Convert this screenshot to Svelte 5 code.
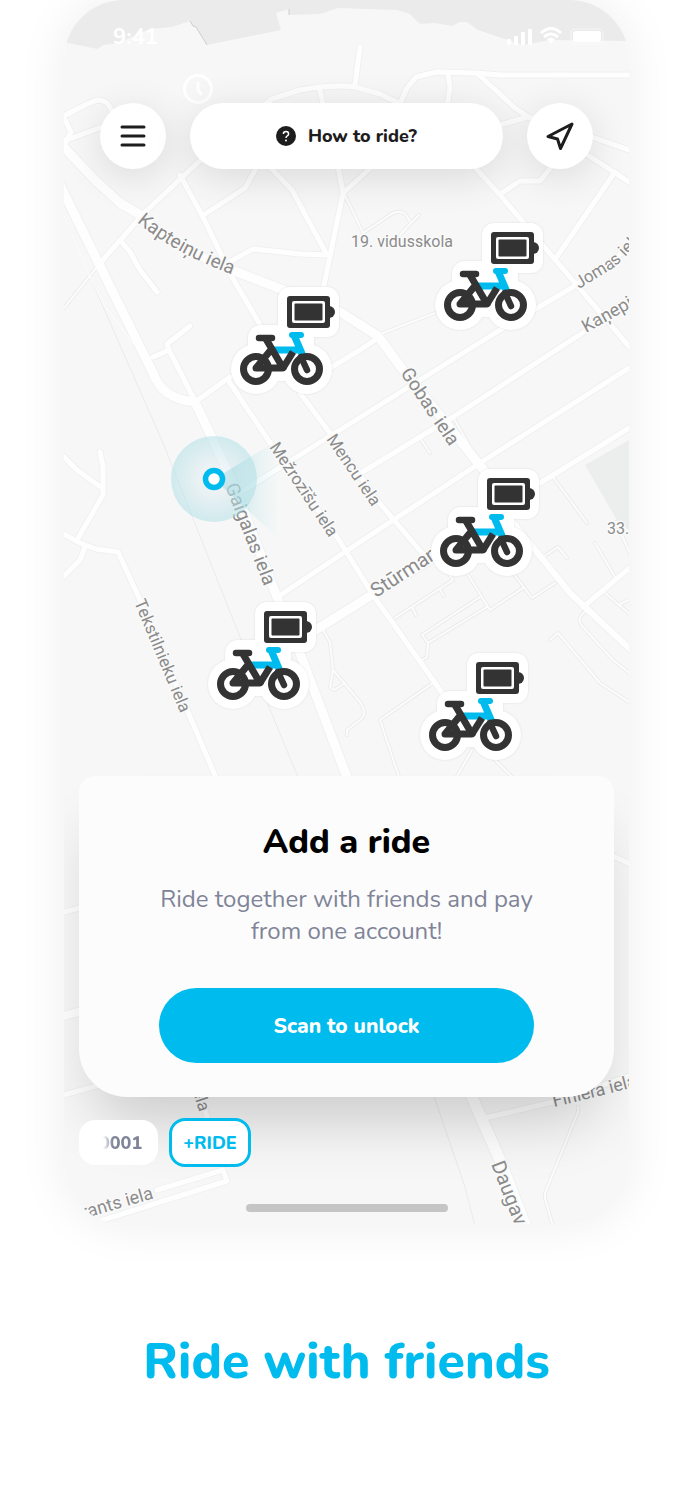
<script lang="ts">
  type Road = { d: string; w: number };
  type Label = { id: string; d: string; text: string; size: number };

  let selected = $state("+RIDE");

  const roads: Road[] = [
    { w: 5, d: "M60 118L85 105L97 100Q104 100 108 104L120 125" },
    { w: 5, d: "M60 142L75 137L110 124M60 110L71 132L66 142" },
    { w: 5, d: "M250 116L272 99L300 90Q335 84 355 87L380 94L405 106" },
    { w: 5, d: "M319 87L324 108M360 47L355 85" },
    { w: 5, d: "M399 106L407 88L416 77L437 72L475 73L500 75H632" },
    { w: 5, d: "M448 73L450 88L447 106M479 75L515 108L530 118" },
    { w: 5, d: "M496 126L528 117L560 126L632 151M580 150L632 184" },
    { w: 5, d: "M615 172L556 258M500 194L520 181H540L552 166" },
    { w: 5, d: "M472 164L500 195L575 283L632 350" },
    { w: 5, d: "M205 156L145 212L101 262" },
    { w: 5, d: "M180 175L203 217L232 277L262 328M202 216L245 188L258 165" },
    { w: 5, d: "M226 264L253 249L300 254L327 255M268 165L292 190L327 255" },
    { w: 5, d: "M338 166L343 193L323 290M343 193L374 165" },
    { w: 5, d: "M120 240L130 252L140 270L157 292" },
    { w: 5, d: "M153 357L169 350L167 344L190 326M169 350L195 401" },
    { w: 5, d: "M195 402L230 377M320 374L360 350L378 338" },
    { w: 5, d: "M228 380L273 447L337 537L373 595L445 697" },
    { w: 5, d: "M300 393L330 433L377 500L428 560" },
    { w: 5, d: "M233 497L303 453L500 330L573 287L632 246" },
    { w: 5, d: "M354 477L453 417L587 330L632 300" },
    { w: 5, d: "M279 596L360 542L480 463L632 366" },
    { w: 5, d: "M540 483L610 440L632 426" },
    { w: 5, d: "M583 607L632 566" },
    { w: 5, d: "M64 457L77 470L102 488M100 452L103 467V495L77 540" },
    { w: 5, d: "M60 532L80 543L96 549L118 552L140 600L188 712L217 780" },
    { w: 5, d: "M85 547L80 560L60 580" },
    { w: 5, d: "M60 913L100 903M60 1096L100 1085" },
    { w: 8, d: "M60 1017L100 1006" },
    { w: 5, d: "M157 1190L223 1170L227 1181L97 1222M190 1060L208 1120" },
    { w: 5, d: "M485 1118L553 1102L632 1075M600 850L632 865" },
    { w: 6, d: "M510 519L570 593L632 651" },
    { w: 9, d: "M314 631L375 593L450 548" },
    { w: 9, d: "M60 143L95 180L120 203L137 213Q175 248 232 270L340 312L378 336L400 366L430 403L490 478" },
    { w: 9, d: "M60 185L97 260L153 373Q162 399 195 402L213 440L233 483L277 597L300 653L348 780" },
    { w: 11, d: "M460 1070L500 1160L527 1230" },
  ];

  const lanes = [
    "M64 308L101 262",
    "M345 195L363 233L393 213Q402 210 406 215L411 223L400 235M411 223L419 215",
    "M383 333L435 313",
    "M453 417L470 447L481 462M420 438L430 453",
    "M553 477L587 523M595 543L615 577M605 593L632 616M620 604L629 600",
    "M543 557L558 547L567 558M513 573L532 598L555 583",
    "M467 573L490 610L523 588M395 618L453 580L440 560",
    "M428 643L422 635L480 597M428 643L487 607M428 643L427 657L422 660M412 607L416 615M440 590L444 596",
    "M585 612Q576 618 582 626L613 660L632 675",
    "M550 640L558 633L600 683L632 704",
    "M433 683L380 720L400 780M472 750L455 780M490 755L520 785",
    "M323 630L330 642L333 670L360 702Q368 714 360 720L347 730V735",
    "M333 670L330 687L334 690L345 683",
    "M616 522L632 558",
    "M578 1107V1112L545 1193V1198L554 1230",
  ];

  const labels: Label[] = [
    { id: "kapteinu", d: "M137 222Q177 256 245 279", text: "Kapteiņu iela", size: 19 },
    { id: "gobas", d: "M400 373L468 474", text: "Gobas iela", size: 19 },
    { id: "mencu", d: "M326 439L391 535", text: "Mencu iela", size: 17 },
    { id: "mezrozisu", d: "M269 447L350 569", text: "Mežrozīšu iela", size: 17 },
    { id: "gaigalas", d: "M225 486L275 614", text: "Gaigalas iela", size: 19 },
    { id: "tekstilnieku", d: "M134 602L199 758", text: "Tekstilnieku iela", size: 17 },
    { id: "sturmanu", d: "M376 598L501 517", text: "Stūrmaņu", size: 20 },
    { id: "jomas", d: "M579 289L615 267L650 232", text: "Jomas iela", size: 17 },
    { id: "kanepju", d: "M586 333L661 291", text: "Kaņepju iela", size: 18 },
    { id: "vidusskola", d: "M351 247H520", text: "19. vidusskola", size: 16 },
    { id: "school", d: "M607 534H700", text: "33. vidusskola", size: 16 },
    { id: "grants", d: "M72 1222L200 1185", text: "Grants iela", size: 18 },
    { id: "daugav", d: "M491 1164L540 1290", text: "Daugavgrīvas", size: 20 },
    { id: "finiera", d: "M554 1107L600 1096L680 1075", text: "Finiera iela", size: 18 },
    { id: "iela", d: "M191 1087L213 1153", text: "iela", size: 17 },
  ];

  const bikes = [
    { x: 460, y: 305 },
    { x: 256, y: 369 },
    { x: 456, y: 551 },
    { x: 233, y: 684 },
    { x: 445, y: 735 },
  ];
</script>

{#snippet bike(x: number, y: number)}
  <g transform="translate({x} {y})">
    <g class="halo">
      <circle r="25" />
      <circle cx="51" r="25" />
      <rect x="-8" y="-44" width="66" height="56" rx="13" />
      <rect x="22" y="-82" width="61" height="50" rx="12" />
    </g>
    <rect x="31" y="-73" width="43" height="32" rx="3" fill="#333" />
    <circle cx="73" cy="-57" r="6" fill="#333" />
    <rect x="36" y="-68" width="33" height="22" rx="2" fill="#fff" />
    <rect x="38.5" y="-65.5" width="28" height="17" rx="1" fill="#333" />
    <g fill="none" stroke-width="7" stroke-linecap="round" stroke-linejoin="round">
      <path d="M17 -19H44M47 -13L38 -34" stroke="#00bbed" stroke-linecap="butt" />
      <path d="M36 -34H45" stroke="#00bbed" stroke-width="6" />
      <g stroke="#333">
        <circle r="12.5" />
        <circle cx="51" r="12.5" />
        <path d="M3 -31H16M45 -12L51 1" stroke-width="6.5" />
        <path d="M10 -30L27 -1H0L14 -18" />
        <path d="M27 -1L37 -17" stroke-linecap="butt" />
      </g>
    </g>
  </g>
{/snippet}

<main>
  <section class="phone">
    <svg class="map" viewBox="64 0 565 1224" preserveAspectRatio="xMidYMid slice" role="img" aria-label="Map">
      <defs>
        <radialGradient id="around">
          <stop offset="0" stop-color="#fbf3f8" stop-opacity="0.5" />
          <stop offset="1" stop-color="#a9dde4" stop-opacity="0.5" />
        </radialGradient>
        <linearGradient id="beam">
          <stop offset="0.3" stop-color="#8fd3dc" stop-opacity="0.4" />
          <stop offset="1" stop-color="#b9e5ea" stop-opacity="0" />
        </linearGradient>
      </defs>

      <rect x="64" width="565" height="1224" fill="#f7f7f7" />
      <path
        fill="#ebebeb"
        d="M64 0V42L97 49L104 45L118 43L150 29L172 27L190 21L193 26L196 27L207 45L281 30L276 13L289 9V15L320 14L338 8L397 10L410 14L420 24L435 23L452 26L460 22H467L478 30L490 34L523 45L550 40L629 41V0Z"
      />
      <path d="M190 21L193 26L196 27L207 45M289 9V15" fill="none" stroke="#cbd1d0" />
      <path d="M585 465L629 440V530L618 522Z" fill="#eceeed" />
      <path class="rail" d="M63 213L90 277L163 443L240 637L298 777M425 1070L465 1187L475 1226" />

      {#each lanes as d}
        <path class="road" {d} stroke="#ebedec" stroke-width="4" />
      {/each}
      {#each roads as road}
        <path class="road" d={road.d} stroke="#eff1f0" stroke-width={road.w + 2} />
      {/each}
      {#each lanes as d}
        <path class="road" {d} stroke="#fcfcfc" stroke-width="2" />
      {/each}
      {#each roads as road}
        <path class="road" d={road.d} stroke="#fefefe" stroke-width={road.w} />
      {/each}
      <path class="road" d="M63 213L90 277L104 305L123 330L140 352" stroke="#fefefe" />

      {#each labels as label}
        <path id={label.id} d={label.d} fill="none" />
        <text class="label" font-size={label.size}>
          <textPath href="#{label.id}">{label.text}</textPath>
        </text>
      {/each}

      <circle cx="214" cy="479" r="43" fill="url(#around)" />
      <path d="M214 479L280 439V540Z" fill="url(#beam)" />
      <circle cx="214" cy="479" r="8.5" fill="#fff" stroke="#00bbed" stroke-width="5.5" />

      {#each bikes as { x, y }}
        {@render bike(x, y)}
      {/each}

      <g fill="none" stroke="#fff" stroke-width="3" stroke-linecap="round">
        <circle cx="198" cy="89" r="13.5" />
        <path d="M198 83V90L201 94" />
      </g>
    </svg>

    <header class="status">
      <span>9:41</span>
      <svg width="102" height="20" viewBox="0 0 102 20" aria-hidden="true">
        <g fill="#fff">
          <rect x="4" y="12" width="4" height="6" rx="1" />
          <rect x="11" y="9" width="4" height="9" rx="1" />
          <rect x="18" y="5" width="4" height="13" rx="1" />
          <rect x="25" y="2" width="4" height="16" rx="1" />
          <path d="M44 12Q48 9 52 12L48 17Z" />
          <rect x="70" y="4" width="28" height="11" rx="3" />
          <path d="M102 7Q104 10 102 12Z" opacity="0.6" />
        </g>
        <path d="M38 6Q48 -3 58 6M41 10Q48 4 55 10" fill="none" stroke="#fff" stroke-width="3" />
        <rect x="68" y="2" width="32" height="15" rx="4" fill="none" stroke="#fff" opacity="0.5" />
      </svg>
    </header>

    <nav class="toolbar">
      <button class="round" aria-label="Menu">
        <svg width="26" height="24" viewBox="0 0 26 24">
          <path d="M2 3H24M2 12H24M2 21H24" stroke="#1d1d1d" stroke-width="3" stroke-linecap="round" />
        </svg>
      </button>
      <button class="help">
        <svg width="20" height="20" viewBox="0 0 20 20" aria-hidden="true">
          <circle cx="10" cy="10" r="10" fill="#1d1d1d" />
          <path d="M7.4 8Q7.4 5.6 10 5.6T12.6 8Q12.6 9.3 11 10.1Q10 10.6 10 12" fill="none" stroke="#fff" stroke-width="1.5" />
          <circle cx="10" cy="14.5" r="1" fill="#fff" />
        </svg>
        How to ride?
      </button>
      <button class="round" aria-label="My location">
        <svg width="30" height="30" viewBox="0 0 30 30">
          <path d="M27 3L3 15.5L12.5 18L15.5 27.5Z" fill="none" stroke="#1d1d1d" stroke-width="3" stroke-linejoin="round" />
        </svg>
      </button>
    </nav>

    <div class="space"></div>

    <article class="card">
      <h2>Add a ride</h2>
      <p>Ride together with friends and pay from one account!</p>
      <button class="scan">Scan to unlock</button>
    </article>

    <div class="rides">
      <button class="chip" class:selected={selected === "0001"} onclick={() => (selected = "0001")}>
        <span class="faded">0001</span>
      </button>
      <button class="chip" class:selected={selected === "+RIDE"} onclick={() => (selected = "+RIDE")}>
        +RIDE
      </button>
    </div>
    <div class="home"></div>
  </section>

  <h1>Ride with friends</h1>
</main>

<style>
  :global(body) {
    margin: 0;
    background: #fff;
  }

  main {
    --blue: #00bbed;
    --grey: #808498;
    padding: 0 64px 108px;
    overflow: hidden;
    font-family: Nunito, Lato, sans-serif;
  }

  button {
    border: 0;
    padding: 0;
    background: #fff;
    font-family: inherit;
    font-weight: 800;
    cursor: pointer;
  }

  .phone {
    position: relative;
    display: flex;
    flex-direction: column;
    overflow: hidden;
    aspect-ratio: 565 / 1224;
    border-radius: 60px;
    box-shadow: 0 0 50px rgba(0, 0, 0, 0.07);
  }

  .map {
    position: absolute;
    inset: 0;
    width: 100%;
    height: 100%;
    z-index: 0;
  }

  .road {
    fill: none;
    stroke-linecap: round;
    stroke-linejoin: round;
  }

  .rail {
    fill: none;
    stroke: #e9ebea;
  }

  .label {
    font-family: Roboto, sans-serif;
    fill: #8b8b8b;
    stroke: #fafafa;
    stroke-width: 3px;
    paint-order: stroke;
  }

  .halo {
    fill: #fff;
    filter: drop-shadow(0 0 1px rgba(0, 0, 0, 0.1));
  }

  .status,
  .toolbar,
  .card,
  .rides,
  .home {
    z-index: 1;
  }

  .status {
    display: flex;
    align-items: center;
    justify-content: space-between;
    padding: 24px 24px 0 49px;
    color: #fff;
    font-size: 22px;
    line-height: 26px;
    font-weight: 700;
  }

  .toolbar {
    display: flex;
    gap: 24px;
    padding: 53px 36px 0;
  }

  .toolbar button {
    display: flex;
    align-items: center;
    justify-content: center;
    height: 66px;
    border-radius: 33px;
    box-shadow: 0 8px 40px rgba(0, 0, 0, 0.12);
  }

  .toolbar .round {
    flex: none;
    width: 66px;
  }

  .toolbar .help {
    flex: 1;
    gap: 12px;
    color: #1d1d1d;
    font-size: 18px;
  }

  .space {
    flex: 1;
  }

  .card {
    display: flex;
    flex-direction: column;
    align-items: center;
    margin: 0 15px;
    padding: 45px 80px 34px;
    border-radius: 16px 16px 48px 48px;
    background: #fcfcfc;
    box-shadow: 0 40px 60px -16px rgba(0, 0, 0, 0.18);
    text-align: center;
  }

  h2 {
    margin: 0;
    font-size: 34px;
    line-height: 42px;
    font-weight: 800;
  }

  p {
    margin: 20px 0 41px;
    color: var(--grey);
    font-size: 24px;
    line-height: 32px;
  }

  .scan {
    align-self: stretch;
    height: 75px;
    border-radius: 38px;
    background: var(--blue);
    color: #fff;
    font-size: 21px;
  }

  .rides {
    display: flex;
    align-items: center;
    gap: 11px;
    padding: 21px 15px 0;
  }

  .chip {
    height: 45px;
    padding: 0 16px 0 20px;
    border-radius: 16px;
    color: var(--grey);
    font-size: 18px;
  }

  .chip.selected {
    height: 49px;
    padding: 0 11px;
    border: 3px solid var(--blue);
    color: var(--blue);
  }

  .faded {
    mask-image: linear-gradient(to right, transparent 4px, #000 14px);
  }

  .home {
    align-self: center;
    width: 202px;
    height: 8px;
    margin: 37px 0 12px;
    border-radius: 4px;
    background: #c5c5c5;
  }

  h1 {
    margin: 107px 0 0;
    color: var(--blue);
    font-size: 50px;
    line-height: 62px;
    font-weight: 800;
    text-align: center;
    white-space: nowrap;
  }
</style>
